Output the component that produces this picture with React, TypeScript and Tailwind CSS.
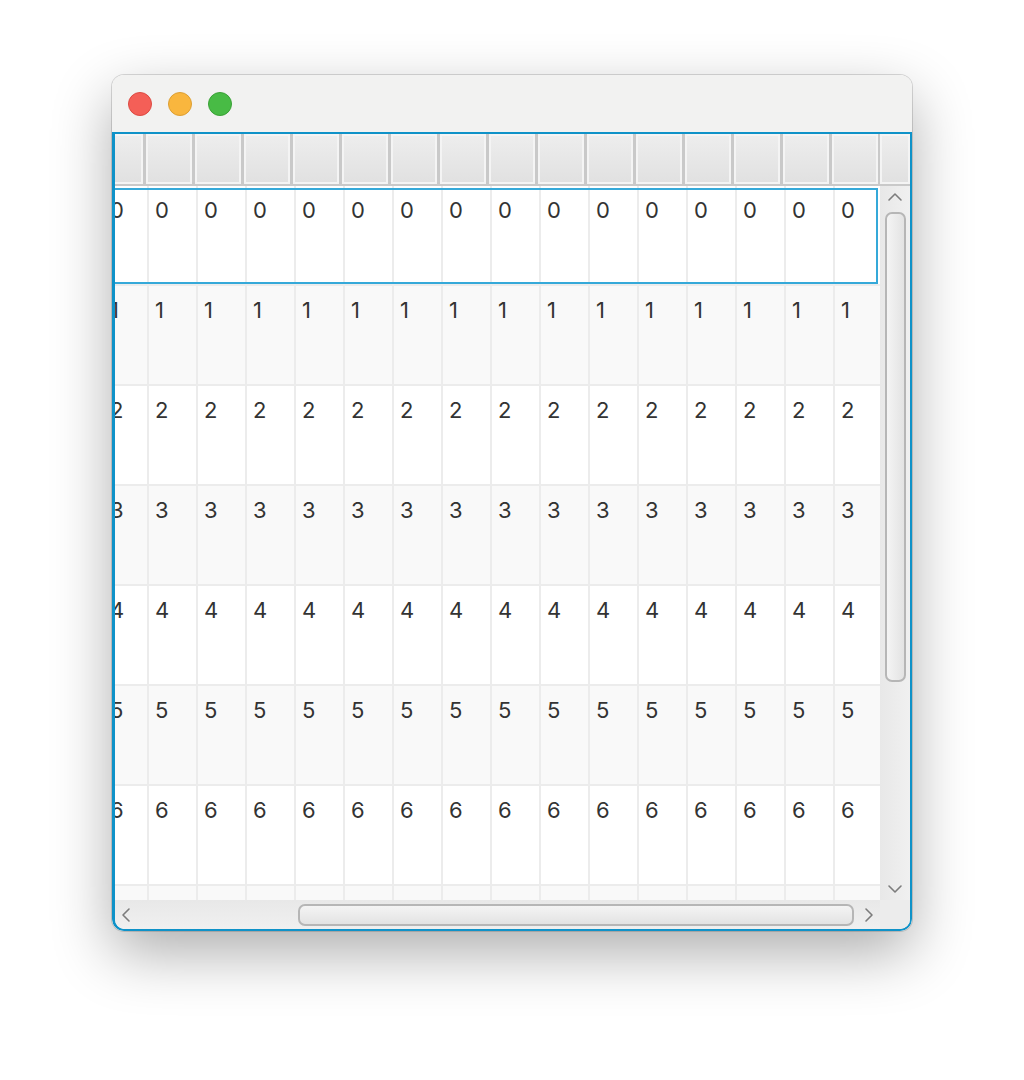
const ROWS = [0, 1, 2, 3, 4, 5, 6, 7]
const BODY_COLS = Array.from({ length: 17 }, (_, i) => i)
const HEAD_COLS = Array.from({ length: 16 }, (_, i) => i)

function Chevron({ dir }: { dir: 'up' | 'down' | 'left' | 'right' }) {
  const d = {
    up: 'M2 9 L8 3 L14 9',
    down: 'M2 3 L8 9 L14 3',
    left: 'M9 2 L3 8 L9 14',
    right: 'M3 2 L9 8 L3 14',
  }[dir]
  const vertical = dir === 'up' || dir === 'down'
  return (
    <svg
      width={vertical ? 16 : 12}
      height={vertical ? 12 : 16}
      viewBox={vertical ? '0 0 16 12' : '0 0 12 16'}
      fill="none"
    >
      <path d={d} stroke="#7c7c7c" strokeWidth="1.6" strokeLinecap="round" strokeLinejoin="round" />
    </svg>
  )
}

function HeaderCell() {
  return (
    <div className="w-[49px] h-full shrink-0 border-r-[3px] border-[#c9c9c9]">
      <div className="h-full border-2 border-[#f4f4f4] bg-gradient-to-b from-[#ededed] to-[#e1e1e1]" />
    </div>
  )
}

function Row({ n }: { n: number }) {
  const odd = n % 2 === 1
  return (
    <div
      className={`relative h-[100px] shrink-0 flex border-b-2 border-[#ececec] ${odd ? 'bg-[#f9f9f9]' : 'bg-white'}`}
    >
      <div className="flex ml-[-15px]">
        {BODY_COLS.map((c) => (
          <div
            key={c}
            className={`w-[49px] h-full shrink-0 border-r-2 border-[#ececec] pt-[11px] text-[22px] leading-[26px] text-[#333333] ${c === 0 ? 'pl-[10px]' : 'pl-[6px]'}`}
          >
            {n}
          </div>
        ))}
      </div>
      {n === 0 && (
        <div className="absolute left-0 right-[2px] top-[2px] bottom-0 border-2 border-l-0 border-[#35a9d9]" />
      )}
    </div>
  )
}

export default function App() {
  return (
    <div
      className="w-[1024px] h-[1080px] bg-white overflow-hidden"
      style={{ fontFamily: 'Inter, "Noto Sans", sans-serif' }}
    >
      <div className="ml-[112px] mt-[75px] w-[800px] h-[856px] rounded-[12px] flex flex-col overflow-hidden shadow-[0_22px_60px_rgba(0,0,0,0.32),0_0_0_1px_rgba(0,0,0,0.14)]">
        {/* title bar */}
        <div className="h-[57px] shrink-0 bg-[#f2f2f1] flex items-center pl-[16px] gap-[16px]">
          <div className="w-[24px] h-[24px] rounded-full bg-[#f45f57] border border-[#dd4a42]" />
          <div className="w-[24px] h-[24px] rounded-full bg-[#f9b63e] border border-[#dd9f33]" />
          <div className="w-[24px] h-[24px] rounded-full bg-[#48bb45] border border-[#3aa136]" />
        </div>

        {/* table view */}
        <div className="flex-1 flex flex-col border-2 border-l-[3px] border-[#0f92c8] rounded-b-[12px] overflow-hidden bg-white">
          {/* header */}
          <div className="h-[52px] shrink-0 flex border-b-2 border-[#c9c9c9] overflow-hidden">
            <div className="w-[765px] shrink-0 overflow-hidden">
              <div className="flex h-full ml-[-18px]">
                {HEAD_COLS.map((c) => (
                  <HeaderCell key={c} />
                ))}
              </div>
            </div>
            <div className="flex-1 border-2 border-[#f4f4f4] bg-gradient-to-b from-[#ededed] to-[#e1e1e1]" />
          </div>

          {/* body + vertical scrollbar */}
          <div className="h-[714px] shrink-0 flex">
            <div className="w-[765px] shrink-0 overflow-hidden flex flex-col">
              {ROWS.map((n) => (
                <Row key={n} n={n} />
              ))}
            </div>
            <div className="flex-1 flex flex-col items-center bg-gradient-to-r from-[#e8e8e8] to-[#f0f0f0]">
              <div className="h-[22px] flex items-center justify-center">
                <Chevron dir="up" />
              </div>
              <div className="mt-[4px] w-[21px] h-[470px] rounded-[7px] border-2 border-[#b6b6b6] bg-gradient-to-r from-[#f4f4f4] to-[#e3e3e3]" />
              <div className="flex-1" />
              <div className="h-[22px] flex items-center justify-center">
                <Chevron dir="down" />
              </div>
            </div>
          </div>

          {/* horizontal scrollbar */}
          <div className="flex-1 flex">
            <div className="w-[765px] shrink-0 flex items-center bg-gradient-to-b from-[#e8e8e8] to-[#f0f0f0]">
              <div className="w-[21px] flex items-center justify-center">
                <Chevron dir="left" />
              </div>
              <div className="ml-[162px] w-[556px] h-[22px] rounded-[7px] border-2 border-[#b6b6b6] bg-gradient-to-b from-[#f4f4f4] to-[#e3e3e3]" />
              <div className="flex-1" />
              <div className="w-[22px] flex items-center justify-center">
                <Chevron dir="right" />
              </div>
            </div>
            <div className="flex-1 bg-[#ececec]" />
          </div>
        </div>
      </div>
    </div>
  )
}
